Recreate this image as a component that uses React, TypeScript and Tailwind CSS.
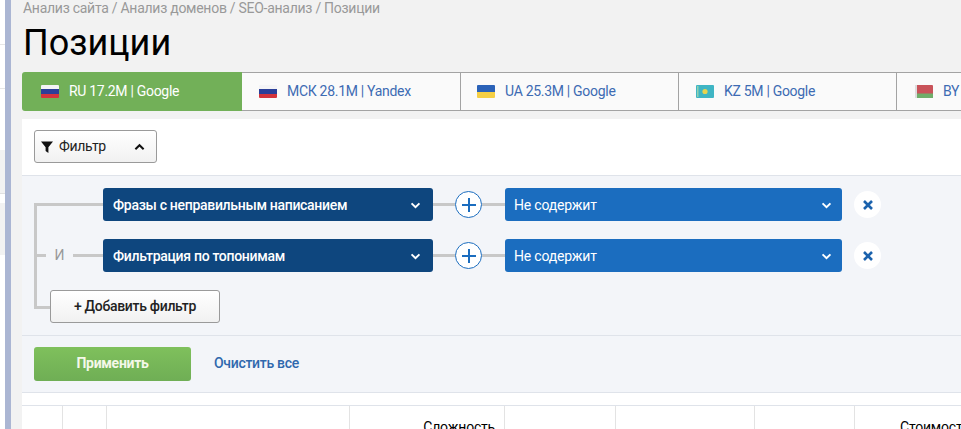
const font = "font-['Roboto',sans-serif]";

function Chevron({ className }: { className: string }) {
  return (
    <svg viewBox="0 0 12 8" className={className} fill="none" stroke="currentColor" strokeWidth="2.2">
      <path d="M1.5 1.5 6 6l4.5-4.5" />
    </svg>
  );
}

function Flag({ colors }: { colors: string[] }) {
  return (
    <span className="flex h-[13px] w-[18px] shrink-0 flex-col overflow-hidden rounded-[1px]">
      {colors.map((c) => (
        <span key={c} className={`flex-1 ${c}`} />
      ))}
    </span>
  );
}

function KzFlag() {
  return (
    <svg viewBox="0 0 18 13" className="h-[13px] w-[18px] shrink-0">
      <rect width="18" height="13" rx="1" fill="#3fb5c4" />
      <circle cx="9" cy="6.5" r="2.6" fill="#e8d44d" />
      <rect x="1" y="1" width="1.5" height="11" fill="#8fd0b0" />
    </svg>
  );
}

function ByFlag() {
  return (
    <svg viewBox="0 0 18 13" className="h-[13px] w-[18px] shrink-0">
      <rect width="18" height="13" rx="1" fill="#c9535a" />
      <rect y="8.5" width="18" height="4.5" fill="#6fae6a" />
      <rect width="2" height="13" fill="#ddd" />
    </svg>
  );
}

const ru = ["bg-[#f4f4f6]", "bg-[#2b3f99]", "bg-[#d3343c]"];
const ua = ["bg-[#2b62b8]", "bg-[#f5cf45]"];

const tabs = [
  { label: "МСК 28.1M | Yandex", flag: <Flag colors={ru} />, cls: "w-[219px] pl-[17px]" },
  { label: "UA 25.3M | Google", flag: <Flag colors={ua} />, cls: "w-[218px] pl-[16px]" },
  { label: "KZ 5M | Google", flag: <KzFlag />, cls: "w-[218px] pl-[17px]" },
  { label: "BY 3.4M | Google", flag: <ByFlag />, cls: "w-[218px] pl-[18px]" },
];

function FilterRow({ name, showLink }: { name: string; showLink?: boolean }) {
  return (
    <div className="flex h-[33px] items-center">
      <div className="flex w-[81px] shrink-0 items-center">
        {showLink ? (
          <>
            <span className="ml-[12px] h-[3px] w-[12px] bg-[#c8c8c8]" />
            <span className="w-[27px] text-center text-[14px] text-[#999]">И</span>
            <span className="h-[3px] w-[30px] bg-[#c8c8c8]" />
          </>
        ) : (
          <span className="ml-[12px] h-[3px] w-[69px] bg-[#c8c8c8]" />
        )}
      </div>
      <div className="flex h-[33px] w-[330px] shrink-0 items-center justify-between rounded-[3px] bg-[#0e467e] pl-[10px] pr-[12px] pt-px text-[14px] font-medium tracking-[-0.3px] text-white">
        {name}
        <Chevron className="h-[7px] w-[11px]" />
      </div>
      <span className="h-[3px] w-[22px] shrink-0 bg-[#c8c8c8]" />
      <div className="flex h-[27px] w-[27px] shrink-0 items-center justify-center rounded-full border border-[#1b6dbf] bg-white">
        <svg viewBox="0 0 14 14" className="h-[14px] w-[14px]" stroke="#1b6dbf" strokeWidth="2">
          <path d="M7 0v14M0 7h14" />
        </svg>
      </div>
      <span className="h-[3px] w-[23px] shrink-0 bg-[#c8c8c8]" />
      <div className="flex h-[33px] w-[337px] shrink-0 items-center justify-between rounded-[3px] bg-[#1b6dbf] pl-[9px] pr-[10px] pt-px text-[14px] font-normal tracking-[-0.2px] text-white">
        Не содержит
        <Chevron className="h-[7px] w-[11px]" />
      </div>
      <div className="ml-[12px] flex h-[27px] w-[27px] shrink-0 items-center justify-center rounded-full bg-white">
        <svg viewBox="0 0 10 10" className="h-[10px] w-[10px]" stroke="#1b62ad" strokeWidth="2.6">
          <path d="M1 1l8 8M9 1L1 9" />
        </svg>
      </div>
    </div>
  );
}

const colWidths = ["w-[41px]", "w-[44px]", "w-[243px]", "w-[155px]", "w-[111px]", "w-[139px]", "w-[100px]", "flex-1"];

export default function App() {
  return (
    <div className={`${font} flex h-[429px] w-[961px] overflow-hidden bg-[#f2f2f2]`}>
      <div className="flex h-full w-[5px] shrink-0 flex-col bg-white">
        <div className="mt-[44px] h-px bg-[#e6e6e6]" />
        <div className="mt-[43px] h-px bg-[#e6e6e6]" />
        <div className="mt-[61px] h-[43px] bg-[#f2f2f2]" />
        <div className="h-px bg-[#e0e0e0]" />
        <div className="mt-[9px] h-[52px] bg-[#f2f2f2]" />
      </div>
      <div className="h-full w-[6px] shrink-0 bg-[#abb6d3]" />
      <main className="min-w-0 flex-1 pl-[11px]">
        <div className="h-[17px] pl-px text-[14px] leading-[17px] tracking-[-0.27px] text-[#999]">
          Анализ сайта / Анализ доменов / SEO-анализ / Позиции
        </div>
        <h1 className="mt-[4px] h-[51px] pl-px text-[36px] font-normal leading-[44px] text-black">Позиции</h1>
        <div className="flex h-[39px] w-[1200px] text-[14px] tracking-[-0.3px]">
          <div className="flex w-[220px] items-center gap-[10px] rounded-l-[3px] bg-[#72b058] pl-[19px] text-white">
            <Flag colors={ru} />
            RU 17.2M | Google
          </div>
          {tabs.map((t) => (
            <div
              key={t.label}
              className={`flex ${t.cls} items-center gap-[10px] border border-l-0 border-[#a3a3a3] bg-[#fafafa] text-[#3d6bb3]`}
            >
              {t.flag}
              {t.label}
            </div>
          ))}
        </div>

        <section className="mt-[8px] w-[1200px] bg-white">
          <div className="h-[57px] border-b border-[#dfe3ea] pl-[12px] pt-[11px]">
            <button className="flex h-[33px] w-[123px] items-center rounded-[3px] border border-[#9a9a9a] bg-gradient-to-b from-white to-[#f1f1f1] pl-[6px] pr-[11px] text-[14px] font-normal tracking-[-0.3px] text-[#222]">
              <svg viewBox="0 0 12 12" className="mr-[6px] h-[12px] w-[12px]" fill="#111">
                <path d="M0 .5h12L7.4 6.2V12L4.6 10V6.2z" />
              </svg>
              Фильтр
              <Chevron className="ml-auto h-[8px] w-[11px] rotate-180 text-[#111]" />
            </button>
          </div>

          <div className="relative h-[160px] border-b border-[#dfe3ea] bg-[#f3f5f9] pt-[12px]">
            <span className="absolute left-[12px] top-[27px] h-[106px] w-[3px] bg-[#c8c8c8]" />
            <span className="absolute left-[12px] top-[130px] h-[3px] w-[20px] bg-[#c8c8c8]" />
            <div className="flex flex-col gap-[18px]">
              <FilterRow name="Фразы с неправильным написанием" />
              <FilterRow name="Фильтрация по топонимам" showLink />
            </div>
            <button className="relative ml-[28px] mt-[18px] h-[33px] w-[170px] rounded-[3px] border border-[#9a9a9a] bg-gradient-to-b from-white to-[#f1f1f1] text-[14px] font-medium tracking-[-0.3px] text-[#222]">
              + Добавить фильтр
            </button>
          </div>

          <div className="flex h-[57px] items-center border-b border-[#dfe3ea] bg-[#f3f5f9] pl-[12px]">
            <button className="h-[34px] w-[157px] pb-px rounded-[3px] bg-gradient-to-b from-[#7fc05c] to-[#6fae55] text-[14px] font-bold tracking-[-0.3px] text-[#f4f8e8]">
              Применить
            </button>
            <span className="ml-[23px] pb-px text-[14px] font-medium tracking-[-0.3px] text-[#2f68ad]">Очистить все</span>
          </div>

          <div className="mt-[12px] flex h-[40px] border-t border-[#dfe3ea] text-[14px] tracking-[-0.2px] text-black">
            {colWidths.map((w, i) => (
              <div key={i} className={`${w} border-r border-[#e3e3e3] pr-[9px] pt-[11px] text-right`}>
                {i === 3 ? "Сложность" : i === 7 ? <span className="block pl-[45px] text-left">Стоимость</span> : null}
              </div>
            ))}
          </div>
        </section>
      </main>
    </div>
  );
}
